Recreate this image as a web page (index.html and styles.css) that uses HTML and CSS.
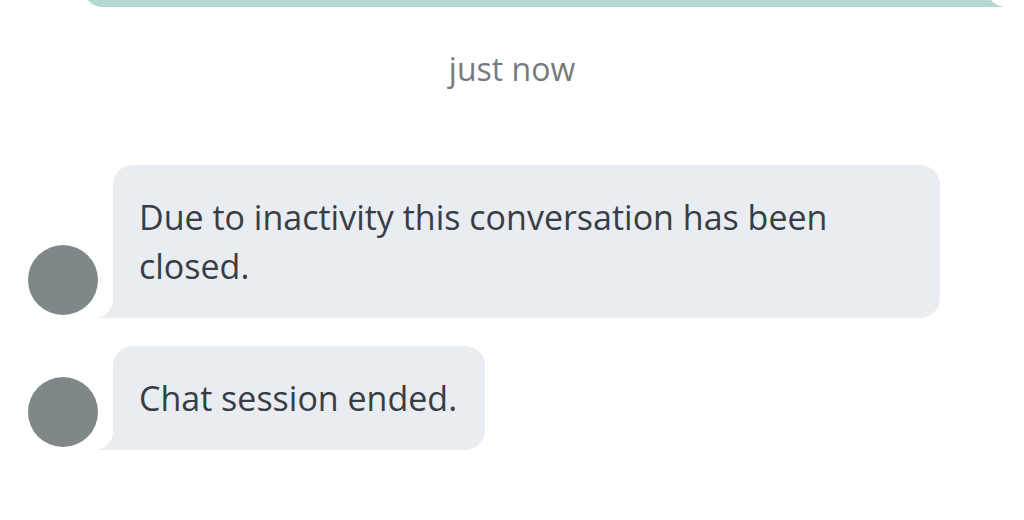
FILE: index.html
```html
<!DOCTYPE html>
<html lang="en">
<head>
<meta charset="utf-8">
<title>Chat</title>
<link rel="stylesheet" href="styles.css">
</head>
<body>
<div class="chat">
  <div class="row row-user">
    <div class="bubble bubble-user"></div>
  </div>
  <div class="timestamp">just now</div>
  <div class="row row-agent">
    <div class="avatar"></div>
    <div class="bubble bubble-agent">Due to inactivity this conversation has been closed.</div>
  </div>
  <div class="row row-agent">
    <div class="avatar"></div>
    <div class="bubble bubble-agent">Chat session ended.</div>
  </div>
</div>
</body>
</html>
```

FILE: styles.css
```css
html, body {
  margin: 0;
  padding: 0;
  background: #ffffff;
}
body {
  font-family: "Open Sans", "Lato", sans-serif;
  color: #383d45;
  overflow: hidden;
}
.chat {
  display: flex;
  flex-direction: column;
  width: 1024px;
  height: 520px;
}
.row-user {
  display: flex;
  justify-content: flex-end;
  padding-right: 37px;
}
.bubble-user {
  position: relative;
  width: 904px;
  height: 60px;
  margin-top: -53px;
  background: #b3d8cf;
  border-radius: 20px 20px 0 20px;
}
.bubble-user::after {
  content: "";
  position: absolute;
  right: -18px;
  bottom: 0;
  width: 18px;
  height: 18px;
  background: radial-gradient(circle at 100% 0, transparent 17.5px, #b3d8cf 18px);
}
.timestamp {
  margin-top: 42px;
  text-align: center;
  font-size: 32px;
  line-height: 40px;
  color: #777a7c;
}
.row-agent {
  display: flex;
  align-items: flex-end;
  gap: 15px;
  padding-left: 28px;
}
.timestamp + .row-agent {
  margin-top: 76px;
}
.row-agent + .row-agent {
  margin-top: 28px;
}
.avatar {
  flex: none;
  width: 70px;
  height: 70px;
  margin-bottom: 3px;
  border-radius: 50%;
  background: #7f8789;
}
.bubble-agent {
  position: relative;
  max-width: 773px;
  padding: 28px 28px 27px 26px;
  font-size: 34px;
  line-height: 49px;
  background: #e9ecf1;
  border-radius: 20px 20px 20px 0;
}
.bubble-agent::before {
  content: "";
  position: absolute;
  left: -18px;
  bottom: 0;
  width: 18px;
  height: 18px;
  background: radial-gradient(circle at 0 0, transparent 17.5px, #e9ecf1 18px);
}
```
